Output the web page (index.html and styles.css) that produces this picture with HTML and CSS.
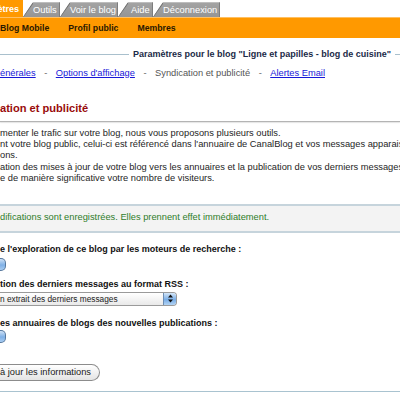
FILE: index.html
```html
<!DOCTYPE html>
<html lang="fr">
<head>
<meta charset="utf-8">
<title>Syndication et publicité</title>
<link rel="stylesheet" href="styles.css">
</head>
<body>
<div class="tabs">
  <div class="tab-active">ètres</div>
  <div class="tab tab-outils">Outils</div>
  <div class="tab tab-voir">Voir le blog</div>
  <div class="tab tab-aide">Aide</div>
  <div class="tab tab-deco">Déconnexion</div>
</div>
<div class="bar">
  <span>Blog Mobile</span>
  <span>Profil public</span>
  <span>Membres</span>
</div>
<div class="title-row">
  <div class="rule rule-left"></div>
  <div class="title">Paramètres pour le blog "Ligne et papilles - blog de cuisine"</div>
  <div class="rule rule-right"></div>
</div>
<div class="subnav">
  <a href="#" class="link">énérales</a>
  <span class="sep">-</span>
  <a href="#" class="link">Options d'affichage</a>
  <span class="sep">-</span>
  <span class="current">Syndication et publicité</span>
  <span class="sep">-</span>
  <a href="#" class="link">Alertes Email</a>
</div>
<h2 class="heading">ation et publicité</h2>
<div class="heading-rule"></div>
<p class="intro">menter le trafic sur votre blog, nous vous proposons plusieurs outils.<br>nt votre blog public, celui-ci est référencé dans l'annuaire de CanalBlog et vos messages apparaissent<br>ons.</p>
<p class="intro intro2">ation des mises à jour de votre blog vers les annuaires et la publication de vos derniers messages<br>e de manière significative votre nombre de visiteurs.</p>
<div class="message">difications sont enregistrées. Elles prennent effet immédiatement.</div>
<div class="label label1">e l'exploration de ce blog par les moteurs de recherche :</div>
<div class="mini-select ms1"></div>
<div class="label label2">tion des derniers messages au format RSS :</div>
<div class="select">
  <span class="select-text">n extrait des derniers messages</span>
  <span class="select-arrow"><svg width="7" height="9" viewBox="0 0 7 9"><polygon points="3.5,0.5 6,3.5 1,3.5" fill="#111"/><polygon points="1,5.5 6,5.5 3.5,8.5" fill="#111"/></svg></span>
</div>
<div class="label label3">es annuaires de blogs des nouvelles publications :</div>
<div class="mini-select ms3"></div>
<div class="button">à jour les informations</div>
<div class="bottom-rule"></div>
</body>
</html>
```
FILE: styles.css
```css
html, body {
  margin: 0;
  padding: 0;
}
body {
  width: 400px;
  height: 400px;
  overflow: hidden;
  background: #fff;
  font-family: "Liberation Sans", Arial, sans-serif;
  font-size: 9.3px;
  color: #222;
}

/* tabs */
.tabs {
  display: flex;
  align-items: flex-end;
  height: 17px;
}
.tab-active {
  width: 23px;
  height: 17px;
  box-sizing: border-box;
  background: #ff9900;
  color: #fff;
  font-weight: bold;
  font-size: 9px;
  display: flex;
  align-items: center;
  justify-content: flex-end;
  padding-right: 4px;
  overflow: hidden;
  white-space: nowrap;
}
.tab {
  height: 15px;
  box-sizing: border-box;
  border-top: 1px solid #bdbdbd;
  border-right: 1px solid #7d7d7d;
  background:
    linear-gradient(to bottom right, transparent calc(50% - 1px), #6e6e6e 50%, transparent calc(50% + 1px)) left top / 10px 100% no-repeat,
    linear-gradient(#a3a3a3, #959595);
  color: #fff;
  display: flex;
  align-items: center;
  padding-left: 10px;
  white-space: nowrap;
  clip-path: polygon(10px 0, 100% 0, 100% 100%, 0 100%);
}
.tab-outils { width: 37px; }
.tab-voir { width: 58px; }
.tab-aide { width: 35px; padding-left: 13px; }
.tab-deco { width: 67px; }

/* orange bar */
.bar {
  height: 21px;
  box-sizing: border-box;
  background: #ff9900;
  border-top: 1px solid #ffc062;
  display: flex;
  align-items: center;
  gap: 19px;
  font-weight: bold;
  font-size: 8.7px;
  color: #2a1800;
  white-space: nowrap;
}

/* title row */
.title-row {
  margin-top: 10px;
  height: 11px;
  display: flex;
  align-items: center;
  gap: 4px;
}
.rule {
  height: 1px;
  background: #a9c0cd;
  margin-top: 1px;
}
.rule-left { width: 129px; flex: none; }
.rule-right { flex: 1; }
.title {
  font-weight: bold;
  font-size: 9px;
  color: #1b2a47;
  white-space: nowrap;
}

/* sub navigation */
.subnav {
  margin-top: 8px;
  height: 11px;
  display: flex;
  align-items: center;
  gap: 8.5px;
  white-space: nowrap;
}
.link {
  color: #1818d8;
  text-decoration: underline;
}
.sep { color: #666; }
.current { color: #555; }

/* heading */
.heading {
  margin: 23px 0 0;
  height: 14px;
  line-height: 14px;
  font-size: 11.1px;
  font-weight: bold;
  color: #990b0b;
  white-space: nowrap;
}
.heading-rule {
  margin-top: 6px;
  height: 1px;
  background: #b4b4b4;
  box-shadow: 0 1px 1px #e2e2e2;
}

/* intro paragraphs */
.intro {
  margin: 5.5px 0 0;
  line-height: 11px;
  white-space: nowrap;
  color: #1e1e1e;
}
.intro2 { margin-top: 1px; }

/* message */
.message {
  margin-top: 20.5px;
  border-top: 2px solid #c6d4dc;
  border-bottom: 2px solid #c6d4dc;
  background: #f3f3f3;
  padding: 6px 0 8px;
  line-height: 11px;
  color: #2f7d2a;
  white-space: nowrap;
}

/* form */
.label {
  line-height: 11px;
  font-weight: bold;
  font-size: 9px;
  color: #111;
  white-space: nowrap;
}
.label1 { margin-top: 11px; }
.label2 { margin-top: 8.5px; }
.label3 { margin-top: 12.5px; }

.mini-select {
  width: 6px;
  height: 13px;
  box-sizing: border-box;
  border: 1px solid #56789e;
  border-left: none;
  border-radius: 0 5px 5px 0;
  background: linear-gradient(#cfe2f6, #7fb0e6 55%, #a9cdf2);
}
.ms1 { margin-top: 2.5px; }
.ms3 { margin-top: 0.5px; }

.select {
  margin-top: 1.5px;
  width: 177px;
  height: 14px;
  box-sizing: border-box;
  border: 1px solid #9a9a9a;
  border-left: none;
  border-radius: 0 4px 4px 0;
  background: linear-gradient(#ffffff, #e9e9e9);
  display: flex;
  align-items: center;
  justify-content: space-between;
  overflow: hidden;
}
.select-text {
  font-size: 8.3px;
  color: #222;
  white-space: nowrap;
}
.select-arrow {
  width: 13px;
  height: 12px;
  box-sizing: border-box;
  border-left: 1px solid #6d8db3;
  background: linear-gradient(#d4e6f8, #79ade6 55%, #b3d4f4);
  display: flex;
  align-items: center;
  justify-content: center;
}
.select-arrow svg { display: block; }

.button {
  margin-top: 21px;
  width: 100px;
  height: 17px;
  box-sizing: border-box;
  border: 1px solid #8c8c8c;
  border-left: none;
  border-radius: 0 9px 9px 0;
  background: linear-gradient(#ffffff, #e4e4e4);
  line-height: 15px;
  color: #1a1a1a;
  white-space: nowrap;
}

.bottom-rule {
  margin-top: 10px;
  height: 1px;
  background: #a9c3d0;
}
```
